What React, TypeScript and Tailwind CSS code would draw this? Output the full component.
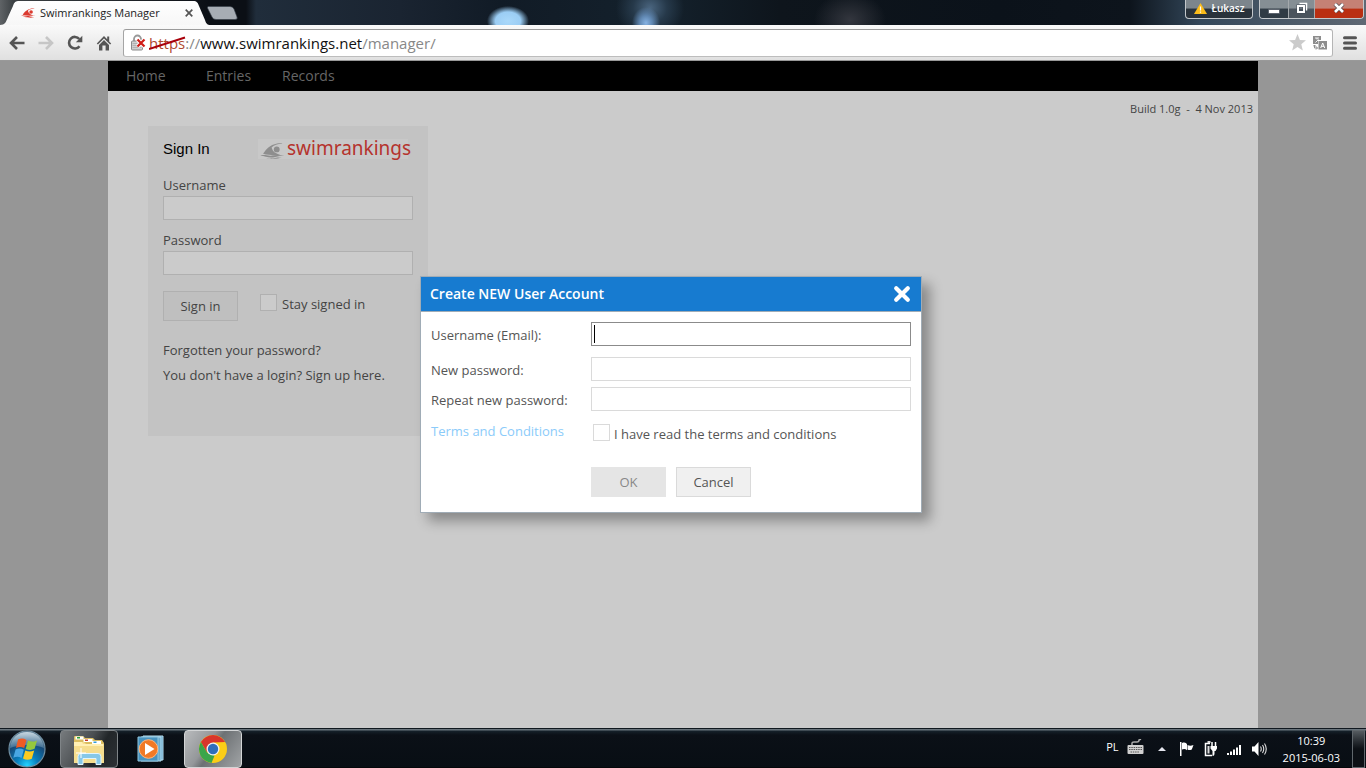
import { useState, type ReactNode } from "react";

const navItems = [
  { label: "Home", width: "w-20" },
  { label: "Entries", width: "w-[76px]" },
  { label: "Records", width: "w-20" },
];

const SwimmerIcon = ({ className, color }: { className: string; color: string }) => (
  <svg viewBox="0 0 26 17" className={className} fill={color}>
    <path d="M3 11.500C6 7 10 2 18 0.600c3-.5 4.500-.4 5.500.1-5 .1-9.500 1.500-11.500 4 .5 2 2 4.800 5 6.300 1.500.8 3 1.200 4 1.700-6 .5-12 .4-18-1.200z" />
    <circle cx="17.500" cy="6.800" r="3.100" />
    <path d="M0 13.400c5-1.600 8 .9 12.500 0 4-1 8-1 13 .5-5-.4-8 .5-12 1.400C9 16 5 14 0 13.400z" />
    <path d="M6 16c4 .8 8 .4 11-.4 2-.4 4-.4 6 .3-3 0-5 .8-9 .9-3 .2-6 0-8-.8z" />
  </svg>
);

const TitleBar = () => (
  <header className="flex h-[25px] items-start overflow-hidden bg-[radial-gradient(ellipse_21px_15px_at_508px_21px,#a9d8fa_0,#9bcdf4_60%,transparent_100%),radial-gradient(ellipse_14px_16px_at_646px_23px,#86b2e2_0,#5f86b0_45%,transparent_100%),radial-gradient(ellipse_34px_32px_at_650px_8px,#4a657f_0,#26394a_50%,transparent_100%),radial-gradient(ellipse_36px_28px_at_850px_20px,#33363e_0,transparent_100%),linear-gradient(to_right,#5f6366_0,#3b4043_14px,#0b0f15_210px,#0b0f15_246px,#202d3b_256px,#1a2431_400px,#111b26_500px,#14212c_660px,#0e151c_780px,#0b121a_1000px,#0d141c_1130px,#33475a_1200px,#606974_1366px)]">
    <div className="flex h-[25px] w-[210px] items-center gap-1 bg-linear-to-b from-white to-[#f7f7f7] pr-3 pl-[21px] [clip-path:path('M0_25C5_25_6_22_8_17L13_6C14_2_16_1_19_1H193C197_1_198_3_199_6L205_20C206_24_208_25_210_25Z')]">
      <SwimmerIcon className="h-3 w-[15px]" color="#db3a2f" />
      <span className="grow font-['Open_Sans',sans-serif] text-[11px] leading-4 whitespace-nowrap text-[#222]">Swimrankings Manager</span>
      <button type="button" aria-label="Close tab" className="mr-1 p-px">
        <svg viewBox="0 0 8 8" className="size-2 stroke-[#555]" strokeWidth="1.700">
          <path d="M.7.7l6.600 6.600M7.300.7L.7 7.300" />
        </svg>
      </button>
    </div>
    <button type="button" aria-label="New tab" className="mt-[6px] -ml-1">
      <svg viewBox="0 0 32 14" className="h-[14px] w-8">
        <path d="M2.500.5H24q3 0 4 2.500l3 8q1 2.500-2 2.500H10q-3 0-4-2.500L1.500 2Q1 .5 2.500.5z" fill="#a7adb4" stroke="#343c46" strokeWidth=".6" />
      </svg>
    </button>
    <div className="ml-auto flex gap-1.5 pr-[2px]">
      <button type="button" className="flex h-[19px] w-[68px] items-center justify-center gap-[5px] rounded-b border border-t-0 border-[#c3c7cb] bg-linear-to-b from-[#7c858c] from-45% to-[#29323b] to-50% pb-[2px]">
        <svg viewBox="0 0 13 11" className="h-[11px] w-[13px]">
          <path d="M6.500 0L13 11H0z" fill="#fcbc19" />
          <path d="M6.500 3.500v4M6.500 8.500v1.200" stroke="#fff" strokeWidth="1.200" />
        </svg>
        <span className="font-['Open_Sans',sans-serif] text-[10px] leading-4 font-semibold text-white">Łukasz</span>
      </button>
      <div className="flex h-[19px] overflow-hidden rounded-b border border-t-0 border-[#c3c7cb]">
        <button type="button" aria-label="Minimize" className="flex w-[29px] items-center justify-center border-r border-[#a4a9ad] bg-linear-to-b from-[#858e94] from-45% to-[#303b45] to-50%">
          <svg viewBox="0 0 12 5" className="mt-1 h-[5px] w-3">
            <path d="M.5.5h11v4H.5z" fill="#fff" stroke="#444c58" strokeWidth=".7" />
          </svg>
        </button>
        <button type="button" aria-label="Restore" className="flex w-[26px] items-center justify-center border-r border-[#a4a9ad] bg-linear-to-b from-[#858e94] from-45% to-[#4b545d] to-50% pb-[2px]">
          <svg viewBox="0 0 12 12" className="size-3 fill-none">
            <path d="M3.500 1.500h7v7" stroke="#fff" strokeWidth="1.500" />
            <path d="M2 4h6v6H2z" stroke="#454d58" strokeWidth="3" />
            <path d="M2 4h6v6H2z" stroke="#fff" strokeWidth="2" />
          </svg>
        </button>
        <button type="button" aria-label="Close" className="flex w-[48px] items-center justify-center bg-linear-to-b from-[#c58175] from-45% to-[#ba2f12] to-50% pb-[2px]">
          <svg viewBox="0 0 12 10" className="h-[10px] w-3">
            <path d="M2 1l8 8M10 1L2 9" stroke="#4f4349" strokeWidth="4" />
            <path d="M2 1l8 8M10 1L2 9" stroke="#fff" strokeWidth="2.600" />
          </svg>
        </button>
      </div>
    </div>
  </header>
);

const Toolbar = () => (
  <div className="flex h-9 items-center border-b border-[#999] bg-linear-to-b from-[#fafafa] to-[#e0e0e0] pr-[9px] pl-[9px]">
    <div className="flex w-[114px] gap-[13px]">
      <button type="button" aria-label="Back">
        <svg viewBox="0 0 16 16" className="size-4 fill-none stroke-[#555]" strokeWidth="2.600">
          <path d="M15.500 8H2M8 2L2 8l6 6" />
        </svg>
      </button>
      <button type="button" aria-label="Forward">
        <svg viewBox="0 0 16 16" className="size-4 fill-none stroke-[#c6c6c6]" strokeWidth="2.600">
          <path d="M.5 8H14M8 2l6 6-6 6" />
        </svg>
      </button>
      <button type="button" aria-label="Reload">
        <svg viewBox="0 0 16 16" className="size-4">
          <path d="M12.500 11.200A5.800 5.800 0 1 1 12.300 4" fill="none" stroke="#555" strokeWidth="2.600" />
          <path d="M15.300.8v6.500H8.800z" fill="#555" />
        </svg>
      </button>
      <button type="button" aria-label="Home page">
        <svg viewBox="0 0 16 16" className="size-4 fill-[#555]">
          <path d="M8 1L.8 8.500l1.100 1L8 3.400l6.100 6.100 1.100-1-2-2.100V1.500h-2v2.800z" />
          <path d="M3 10l5-5 5 5v5.500H9.600v-5H6.400v5H3z" />
        </svg>
      </button>
    </div>
    <div className="flex h-7 grow items-center rounded-[3px] border border-t-[#9b9b9b] border-r-[#b5b5b5] border-b-[#bdbdbd] border-l-[#a5a5a5] bg-white pr-[5px] pl-[6px]">
      <svg viewBox="0 0 17 17" className="h-[17px] w-[17px] shrink-0">
        <path d="M4 8V5a3.500 3.500 0 0 1 7 0v3" fill="none" stroke="#999" strokeWidth="1.800" />
        <rect x="1.500" y="7" width="11" height="9" rx="1" fill="#d0d0d0" stroke="#8b8b8b" />
        <path d="M2.500 9.500h9M2.500 11.500h9M2.500 13.500h9" stroke="#b2b2b2" />
        <path d="M7.500 5.500l7 7M14.500 5.500l-7 7" stroke="#fff" strokeWidth="4" />
        <path d="M7.500 5.500l7 7M14.500 5.500l-7 7" stroke="#cf1b14" strokeWidth="2.200" />
      </svg>
      <div className="flex grow pl-[2px] font-['Open_Sans',sans-serif] text-[15px] leading-5 text-[#888]">
        <span className="relative text-[#b04a30]">
          https
          <svg viewBox="0 0 38 14" className="absolute top-[3px] left-0 h-[14px] w-[38px]">
            <path d="M0 13L36 1.500" stroke="#a9000b" strokeWidth="2" />
          </svg>
        </span>
        <span>://</span>
        <span className="text-[#111]">www.swimrankings.net</span>
        <span>/manager/</span>
      </div>
      <button type="button" aria-label="Bookmark" className="mr-[7px]">
        <svg viewBox="0 0 17 17" className="h-[17px] w-[17px] fill-[#cbcbcb]">
          <path d="M8.500 0l2.400 5.900 6.100.4-4.700 4 1.500 6.200-5.300-3.400-5.300 3.400 1.500-6.200L0 6.300l6.100-.4z" />
        </svg>
      </button>
      <button type="button" aria-label="Translate">
        <svg viewBox="0 0 14 14" className="size-[14px]">
          <path d="M0 0h8v4H5v4H0z" fill="#8d8d8d" />
          <path d="M2 2h4M4 2v1.500M5.500 3.500L2.500 6.500" stroke="#fff" strokeWidth=".9" />
          <rect x="5.500" y="5" width="8.500" height="8.500" fill="#8d8d8d" />
          <path d="M7.700 12L9.700 7l2 5M8.300 10.300h2.800" stroke="#fff" fill="none" />
          <path d="M1.500 9v3h3M3 10.500L4.500 12 3 13.500M0 10.500L1.500 9 3 10.500" stroke="#8d8d8d" fill="none" />
        </svg>
      </button>
    </div>
    <button type="button" aria-label="Menu" className="ml-[10px]">
      <svg viewBox="0 0 14 14" className="size-[14px] stroke-[#555]" strokeWidth="3" strokeLinecap="round">
        <path d="M1.500 1.800h11M1.500 7h11M1.500 12.200h11" />
      </svg>
    </button>
  </div>
);

const SignInPanel = () => (
  <form className="mt-[35px] ml-10 h-[310px] w-[280px] bg-[#c3c3c3] px-[15px] pt-3" onSubmit={(e) => e.preventDefault()}>
    <div className="flex h-[22px] items-center justify-between pr-[5px]">
      <h1 className="font-['Liberation_Sans',sans-serif] text-[15px] leading-5 text-black">Sign In</h1>
      <div className="flex h-5 w-[150px] items-center gap-[2px] bg-[#c8c8c8] pl-[2px]">
        <SwimmerIcon className="mt-1 h-4 w-[25px] shrink-0" color="#8e8e8e" />
        <span className="pb-[2px] font-['Noto_Sans',sans-serif] text-[19px] leading-5 text-[#b5332d]">swimrankings</span>
      </div>
    </div>
    <div className="mt-[14px]">
      <label htmlFor="login" className="block h-[22px] leading-[22px]">Username</label>
      <input id="login" type="text" className="block h-6 w-full border border-[#b0b0b0] bg-[#cbcbcb] px-1" />
    </div>
    <div className="mt-[9px]">
      <label htmlFor="pass" className="block h-[22px] leading-[22px]">Password</label>
      <input id="pass" type="password" className="block h-6 w-full border border-[#b0b0b0] bg-[#cbcbcb] px-1" />
    </div>
    <div className="mt-4 flex gap-[22px]">
      <button type="submit" className="h-[30px] w-[75px] border border-[#b0b0b0] bg-[#bfbfbf] pt-[2px]">Sign in</button>
      <label className="flex h-6 items-start gap-[5px] leading-[26px]">
        <input type="checkbox" className="mt-[3px] size-[17px] appearance-none border border-[#b0b0b0] bg-[#cbcbcb]" />
        Stay signed in
      </label>
    </div>
    <div className="mt-[17px] flex flex-col items-start leading-[25px]">
      <a href="#forgotten">Forgotten your password?</a>
      <a href="#signup">You don't have a login? Sign up here.</a>
    </div>
  </form>
);

const NewAccountDialog = () => {
  const [accepted, setAccepted] = useState(false);

  return (
    <div role="dialog" aria-labelledby="dialog-title" className="w-[502px] border border-[#a0acb6] bg-white text-[#555] shadow-[8px_8px_12px_rgba(0,0,0,0.33)]">
      <div className="flex h-[35px] items-center justify-between border-b border-[#a0acb6] bg-[#177bd0] pr-[10px] pl-[9px]">
        <h2 id="dialog-title" className="text-sm leading-5 font-semibold text-white">Create NEW User Account</h2>
        <button type="button" aria-label="Close dialog">
          <svg viewBox="0 0 18 18" className="size-[18px] stroke-white" strokeWidth="4.200" strokeLinecap="round">
            <path d="M3.200 3.200l11.600 11.600M14.800 3.200L3.200 14.800" />
          </svg>
        </button>
      </div>
      <form className="grid grid-cols-[160px_1fr] px-[10px] pt-[10px] pb-[15px]" onSubmit={(e) => e.preventDefault()}>
        <label htmlFor="email" className="h-[35px] leading-[26px]">Username (Email):</label>
        <div className="relative">
          <input id="email" type="text" className="block h-6 w-full border border-[#8b8b8b] px-1 outline-none" />
          <span className="absolute top-[3px] left-[3px] h-[18px] w-px bg-black" />
        </div>
        <label htmlFor="new-pass" className="h-[30px] leading-[26px]">New password:</label>
        <input id="new-pass" type="password" className="h-6 border border-[#dadada] px-1" />
        <label htmlFor="repeat-pass" className="h-[34px] leading-[26px]">Repeat new password:</label>
        <input id="repeat-pass" type="password" className="h-6 border border-[#dadada] px-1" />
        <a href="#terms" className="h-[46px] leading-5 text-[#8bcbfa]">Terms and Conditions</a>
        <label className="flex h-6 items-start gap-1 pl-[2px] leading-[26px]">
          <input
            type="checkbox"
            checked={accepted}
            onChange={(e) => setAccepted(e.target.checked)}
            className="mt-[3px] size-[17px] appearance-none border border-[#dadada] bg-white checked:bg-[#177bd0]"
          />
          I have read the terms and conditions
        </label>
        <div className="col-start-2 flex gap-[10px]">
          <button type="submit" disabled={!accepted} className="h-[30px] w-[75px] bg-[#e5e5e5] pt-[2px] text-[#888]">OK</button>
          <button type="button" className="h-[30px] w-[75px] border border-[#dadada] bg-[#f0f0f0] pt-[2px]">Cancel</button>
        </div>
      </form>
    </div>
  );
};

const TaskButton = ({ label, className, children }: { label: string; className: string; children: ReactNode }) => (
  <button type="button" aria-label={label} className={`flex h-[38px] w-[58px] items-center justify-center rounded-sm border ${className}`}>
    {children}
  </button>
);

const Taskbar = () => (
  <footer className="flex h-10 shrink-0 items-center border-t border-[#10181f] bg-[linear-gradient(to_bottom,#68737b_0,#68737b_1px,#15212a_2px,#0b1017_6px,#080e14_38px,#000_39px)] font-['Open_Sans',sans-serif] text-[11px] text-white">
    <button type="button" aria-label="Start" className="ml-2 w-[52px]">
      <svg viewBox="0 0 38 38" className="size-[38px]">
        <defs>
          <radialGradient id="orb" cx=".5" cy=".95" r=".85">
            <stop offset="0" stopColor="#24d3ff" />
            <stop offset=".35" stopColor="#087ebc" />
            <stop offset=".75" stopColor="#174a78" />
            <stop offset="1" stopColor="#52748c" />
          </radialGradient>
          <linearGradient id="orbShine" x1="0" y1="0" x2="0" y2="1">
            <stop offset="0" stopColor="#dbe8f0" stopOpacity=".85" />
            <stop offset="1" stopColor="#7da5be" stopOpacity=".4" />
          </linearGradient>
        </defs>
        <circle cx="19" cy="19" r="18" fill="url(#orb)" stroke="#6f8ea1" strokeWidth="1.200" />
        <path d="M2 18C3 8 10 2 19 2s16 6 17 16c-9-4-24-4-34 0z" fill="url(#orbShine)" />
        <path d="M10 9.500c3-1.500 5.500-1.300 8.500.4l-2.300 8.200c-2.600-1.400-5.200-1.500-8.200-.2z" fill="#ef5b24" />
        <path d="M20 10.500c3 1.500 6 1.500 9-.1l-2.400 8.400c-3 1.500-5.900 1.500-8.900.1z" fill="#94c83d" />
        <path d="M7.600 19.500c3-1.300 5.600-1.200 8.200.2l-2.300 8.200c-2.600-1.600-5.200-1.600-8.200-.2z" fill="#49a7e3" />
        <path d="M17.300 20.500c3 1.400 5.900 1.400 8.900-.1l-2.400 8.300c-3 1.400-5.900 1.500-8.800-.1z" fill="#fccb20" />
      </svg>
    </button>
    <TaskButton label="Windows Explorer" className="border-[#7f8487] bg-[linear-gradient(120deg,#777b7e_0,#4a4e51_45%,#222629_65%,#2d3135_100%)]">
      <svg viewBox="0 0 34 32" className="mt-1 h-8 w-[34px]">
        <path d="M2 5V2q0-1 1-1h8l2 2h8l2 2h7l2 3v20H2z" fill="#dbbd60" />
        <path d="M3.500 1.500h8v3h-8zM11.500 4h9v3h-9zM20 6h9v3h-9z" fill="#fff" />
        <path d="M5 2h3v1.500H5z" fill="#29a038" />
        <path d="M13 4.500h3V6h-3z" fill="#c83a28" />
        <path d="M21.500 6.500h3V8h-3z" fill="#319bd8" />
        <path d="M2 7h10l2 2h18v19H2z" fill="#f5dd8e" />
        <path d="M2 7h8l1 2h20v2H2z" fill="#fff0b5" />
        <path d="M6 29.500v-8q0-3 3-3h17q3 0 3 3v8h-5v-6H11v6z" fill="#86c8e8" stroke="#e0f5ff" />
        <path d="M9 13v10M4 18h10" stroke="#fff" strokeWidth="1" />
      </svg>
    </TaskButton>
    <button type="button" aria-label="Media Player" className="mr-5 ml-[19px]">
      <svg viewBox="1 1 27 27" className="size-[27px]">
        <path d="M7 2h20v24H7z" fill="#5e9fc5" stroke="#b7dff1" />
        <path d="M5 3h20v24H5z" fill="#6bacce" stroke="#b7dff1" />
        <path d="M2 3h20v24H2z" fill="#4893bf" stroke="#90c6df" />
        <circle cx="12.500" cy="15" r="9.300" fill="#f17925" stroke="#ffb67b" />
        <path d="M9 9l9.500 6L9 21z" fill="#fff" />
      </svg>
    </button>
    <TaskButton label="Chrome" className="border-[#d3d5d6] bg-[linear-gradient(125deg,#b9bbbd_0,#94979a_38%,#6d7174_50%,#a1a4a6_100%)]">
      <svg viewBox="0 0 30 30" className="size-[30px]">
        <circle cx="15" cy="15" r="14" fill="#fbcd17" />
        <path d="M2.900 8A14 14 0 0 1 27.100 8L15 8.500 9 18.500z" fill="#d9362c" />
        <path d="M2.900 8L9 18.500l7.500 3.300L13.500 29A14 14 0 0 1 2.900 8z" fill="#3ba54a" />
        <circle cx="15" cy="15" r="6.500" fill="#f2f2f2" />
        <circle cx="15" cy="15" r="5.200" fill="#2f6ebc" />
      </svg>
    </TaskButton>
    <div className="ml-auto flex items-center">
      <span className="mr-2 pb-[2px]">PL</span>
      <svg viewBox="0 0 17 16" className="mr-[14px] mb-1 h-4 w-[17px]">
        <path d="M5 6V4q0-1 2-1h3q2 0 2-2l2-1" stroke="#aaa" fill="none" strokeWidth="1.500" />
        <rect x=".5" y="6" width="16" height="9" rx="1" fill="#d0d0d0" />
        <path d="M2 8.500h13M2 10.500h13M3.500 13h9" stroke="#555" strokeDasharray="1.500 .8" />
      </svg>
      <svg viewBox="0 0 8 4" className="mr-[13px] h-1 w-2 fill-[#e4e6ee]">
        <path d="M4 0l4 4H0z" />
      </svg>
      <svg viewBox="0 0 16 16" className="mr-2 size-4 fill-white">
        <path d="M1 1h1.500v14H1zM3 2c3-1 4 0 5 1.200v6C6.500 8 5 7.500 3 8.500zM8.500 4c2 1 3.500 1 6 0-.7 2-1.200 3-1.700 4.500-2 .8-3 .7-4.300 0z" />
      </svg>
      <svg viewBox="0 0 16 16" className="mr-2 size-4">
        <path d="M7 2.500H2.500v12H9" fill="none" stroke="#fff" strokeWidth="1.500" />
        <path d="M4.500 0h3v2h-3zM4.500 5h2v7.500h-2z" fill="#ddd" />
        <path d="M9 1v4M12.500 1v4" stroke="#fff" strokeWidth="1.500" />
        <path d="M7.500 5H14v2.500L12.500 10H11.500v3q0 2-2 2v-5L7.500 7.500z" fill="#fff" />
      </svg>
      <svg viewBox="0 0 15 14" className="mr-[9px] h-[14px] w-[15px] fill-white">
        <path d="M0 11h2v2H0zM3 9.500h2V13H3zM6 7.500h2V13H6zM9 5.500h2V13H9zM12 3h2v10h-2z" />
      </svg>
      <svg viewBox="0 0 16 16" className="size-4">
        <path d="M1 5.500h2.500l4-4.500v14l-4-4.500H1z" fill="#fff" />
        <path d="M9.500 5.500q1.500 2.500 0 5M11.500 4q2.500 4 0 8M13.500 2.500q3.500 5.500 0 11" stroke="#ddd" fill="none" strokeWidth="1.100" />
      </svg>
      <div className="mr-3 ml-4 text-center leading-[17px]">
        <p>10:39</p>
        <p>2015-06-03</p>
      </div>
      <button type="button" aria-label="Show desktop" className="mr-px h-[38px] w-[13px] border border-[#60676c] bg-linear-to-b from-[#555b60] to-[#0c1015] to-50%" />
    </div>
  </footer>
);

const App = () => (
  <div className="flex min-h-screen flex-col">
    <TitleBar />
    <Toolbar />
    <main className="relative flex grow flex-col bg-[#969696] font-['Open_Sans',sans-serif] text-[13px] text-[#444]">
      <div className="mx-auto w-full max-w-[1150px] grow bg-[#cbcbcb]">
        <nav className="flex h-[30px] items-center bg-black pl-[18px] text-sm text-[#666]">
          {navItems.map((item) => (
            <a key={item.label} href={`#${item.label.toLowerCase()}`} className={item.width}>
              {item.label}
            </a>
          ))}
        </nav>
        <div className="flex items-start justify-between">
          <SignInPanel />
          <p className="pt-[10px] pr-[5px] text-[11px] leading-4 whitespace-pre">{"Build 1.0g  -  4 Nov 2013"}</p>
        </div>
      </div>
      <div className="absolute inset-0 flex items-center justify-center pr-6">
        <NewAccountDialog />
      </div>
    </main>
    <Taskbar />
  </div>
);

export default App;
